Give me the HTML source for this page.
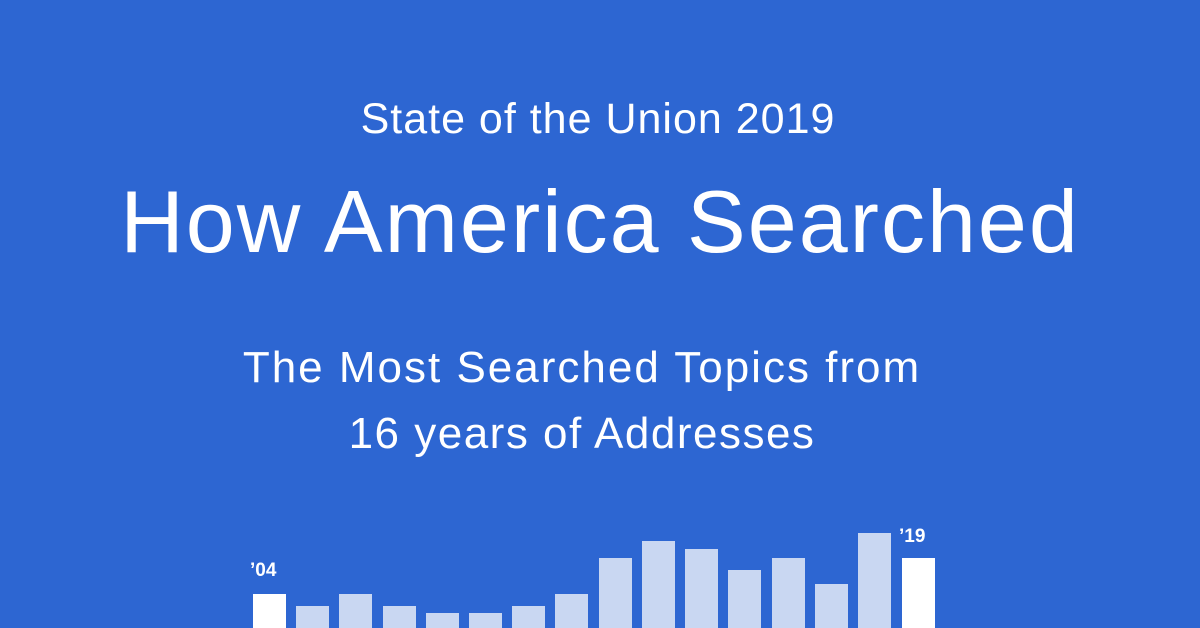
<!DOCTYPE html><html><head><style>
body{margin:0;width:1200px;height:628px;background:#2d66d2;overflow:hidden;position:relative;font-family:"Liberation Sans",sans-serif;color:#fff}
.t{position:absolute;left:0;width:1200px;text-align:center;white-space:nowrap}
.b{position:absolute;bottom:0;width:33px;background:#c9d7f2}
.l{position:absolute;font-weight:bold;font-size:19px}
</style></head><body>
<div class="t" style="top:95px;font-size:43px;letter-spacing:1px;left:-2px">State of the Union 2019</div>
<div class="t" style="top:171px;font-size:88px;letter-spacing:2px">How America Searched</div>
<div class="t" style="top:335px;font-size:44px;letter-spacing:2px;line-height:66px;left:-18px">The Most Searched Topics from<br><span style="letter-spacing:1.5px">16 years of Addresses</span></div>
<div class="l" style="left:250px;top:560px">’04</div>
<div class="l" style="left:899px;top:526px">’19</div>
<div class="b" style="left:253px;height:34px;background:#fff"></div>
<div class="b" style="left:296px;height:22px"></div>
<div class="b" style="left:339px;height:34px"></div>
<div class="b" style="left:383px;height:22px"></div>
<div class="b" style="left:426px;height:15px"></div>
<div class="b" style="left:469px;height:15px"></div>
<div class="b" style="left:512px;height:22px"></div>
<div class="b" style="left:555px;height:34px"></div>
<div class="b" style="left:599px;height:70px"></div>
<div class="b" style="left:642px;height:87px"></div>
<div class="b" style="left:685px;height:79px"></div>
<div class="b" style="left:728px;height:58px"></div>
<div class="b" style="left:772px;height:70px"></div>
<div class="b" style="left:815px;height:44px"></div>
<div class="b" style="left:858px;height:95px"></div>
<div class="b" style="left:902px;height:70px;background:#fff"></div>
</body></html>
